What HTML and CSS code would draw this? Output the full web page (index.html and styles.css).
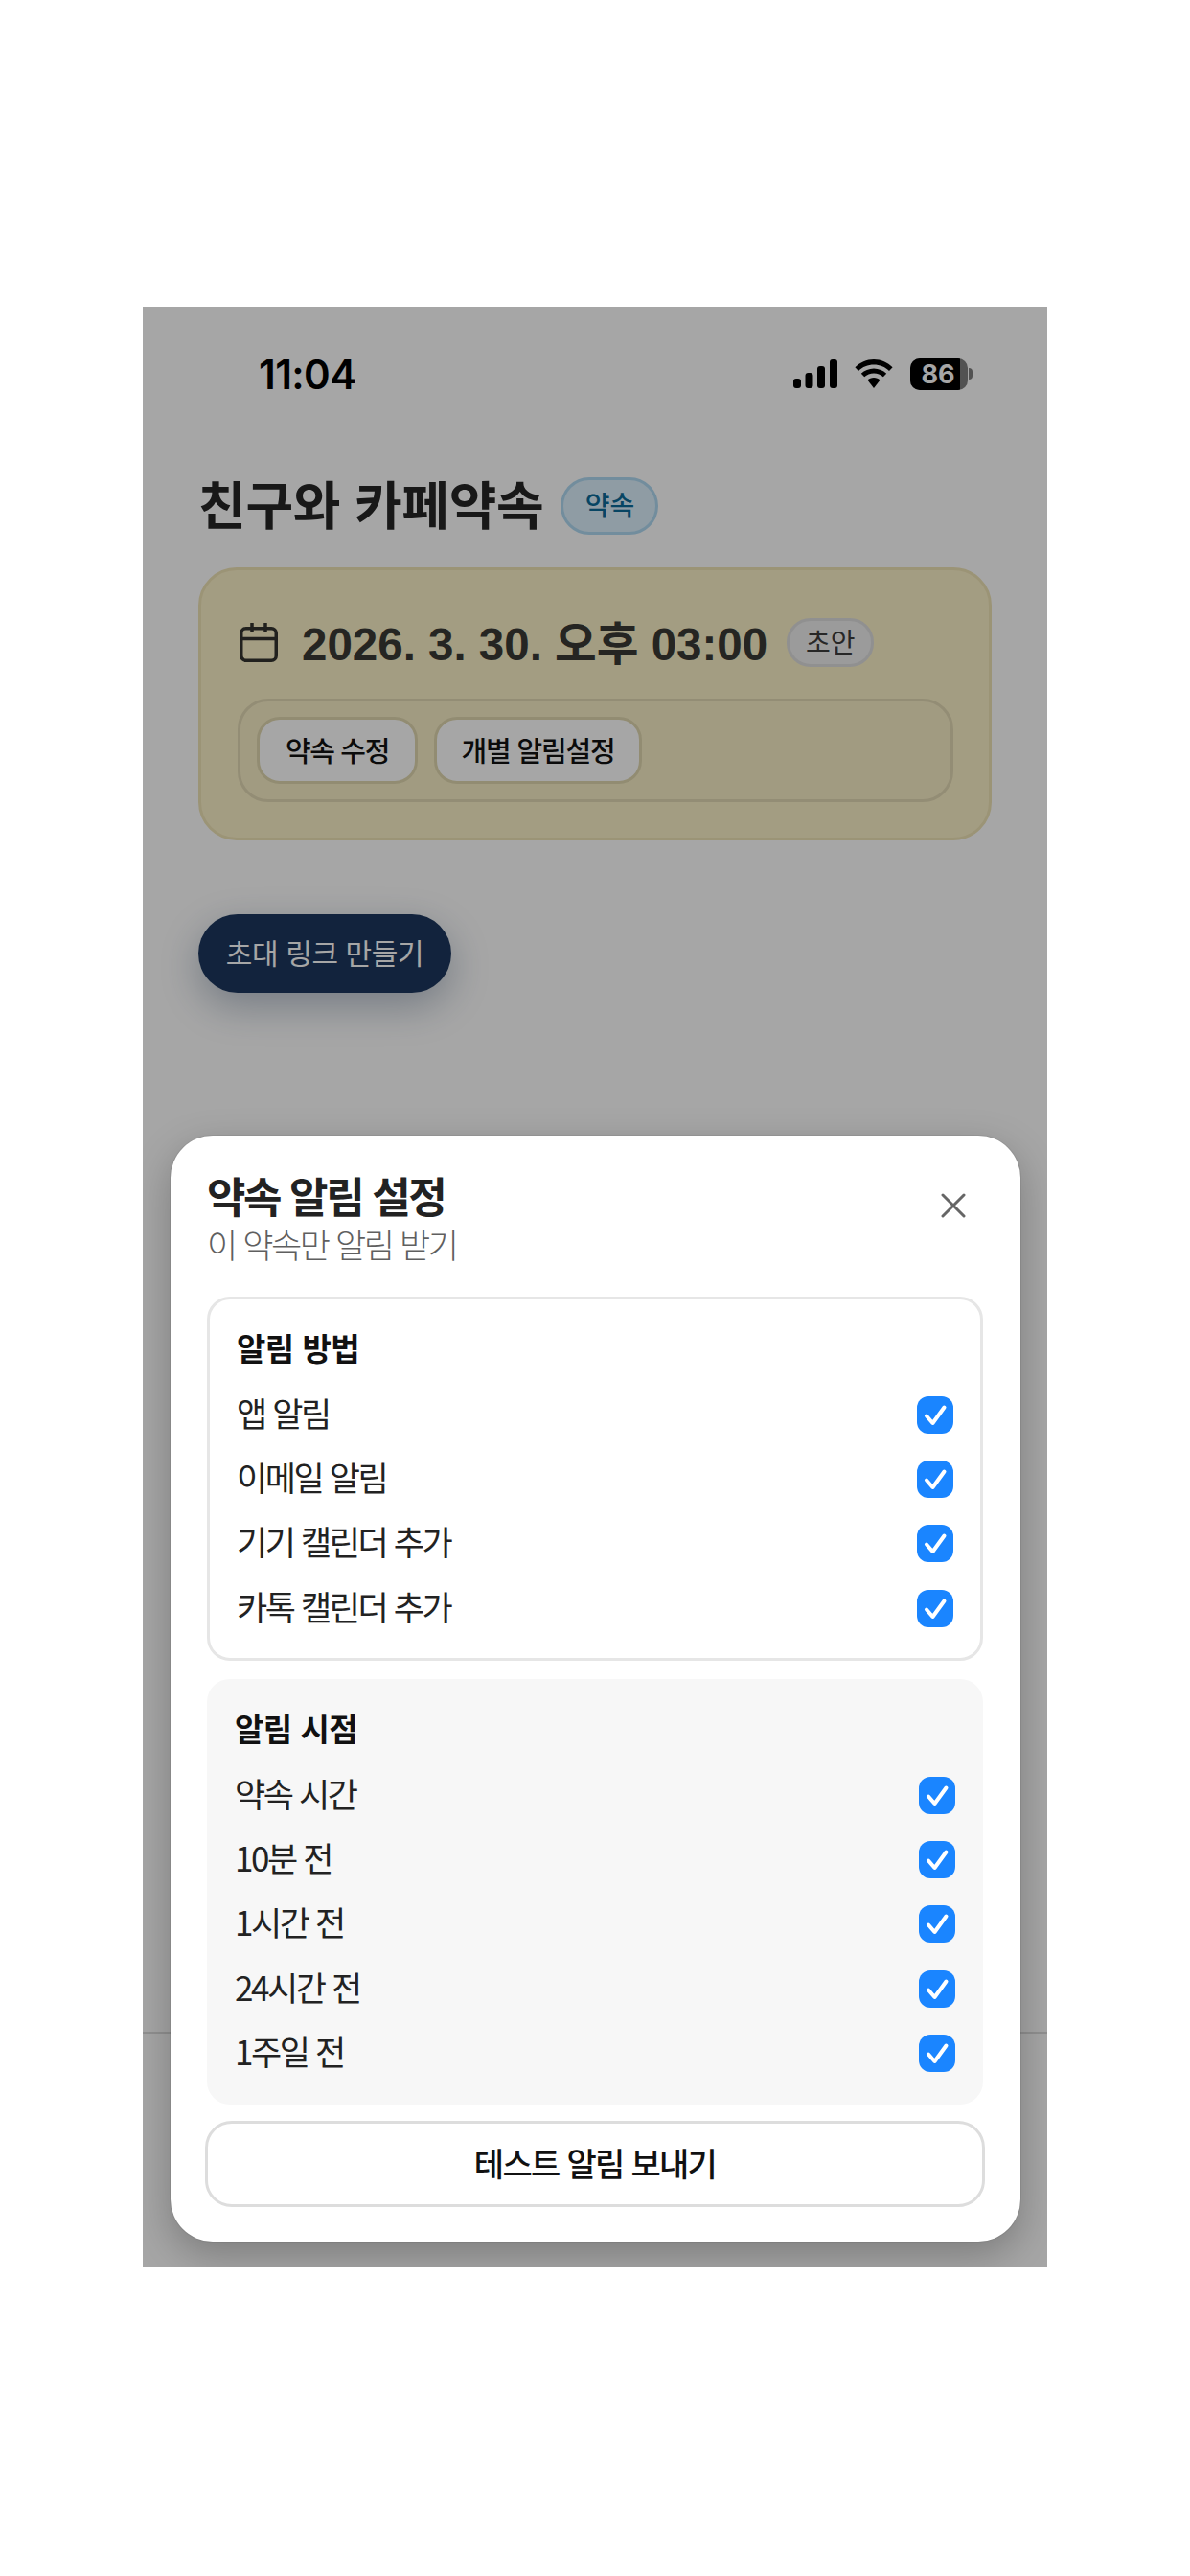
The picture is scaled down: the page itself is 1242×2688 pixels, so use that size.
FILE: index.html
```html
<!DOCTYPE html>
<html lang="ko">
<head>
<meta charset="utf-8">
<title>약속 알림 설정</title>
<link rel="stylesheet" href="styles.css">
</head>
<body>
<div class="phone">
  <div class="screen">
    <div class="status">
      <span class="time">11:04</span>
      <div class="status-icons">
        <svg class="signal" width="46" height="30" viewBox="0 0 46 30"><rect x="0" y="20" width="8" height="10" rx="3"/><rect x="12.500" y="14" width="8" height="16" rx="3"/><rect x="25" y="7" width="8" height="23" rx="3"/><rect x="38" y="0" width="8" height="30" rx="3"/></svg>
        <svg class="wifi" width="40" height="30" viewBox="0 0 40 30"><path d="M20 5.500c6.200 0 11.800 2.400 16 6.400l3.600-3.700C34.400 3.200 27.600 0 20 0S5.600 3.200.4 8.200L4 11.900C8.200 7.900 13.800 5.500 20 5.500z"/><path d="M20 14.500c3.800 0 7.200 1.500 9.800 3.800l3.400-3.600C29.700 11.500 25.100 9.400 20 9.400s-9.700 2.100-13.200 5.300l3.400 3.600c2.600-2.300 6-3.800 9.800-3.800z"/><path d="M20 19c-2.600 0-4.900 1-6.600 2.600L20 30l6.600-8.400C24.900 20 22.600 19 20 19z"/></svg>
        <div class="battery"><div class="batt-body"><span class="batt-fill">86</span></div><span class="batt-cap"></span></div>
      </div>
    </div>
    <div class="title-row">
      <h1 class="title">친구와 카페약속</h1>
      <span class="type-pill">약속</span>
    </div>
    <div class="card">
      <div class="date-row">
        <svg class="cal" width="40" height="41" viewBox="0 0 40 41" fill="none" stroke="#33332e" stroke-width="3.500"><rect x="1.750" y="5.750" width="36.500" height="33.500" rx="5"/><path d="M1.750 16.500h36.500M13 0v10M27 0v10"/></svg>
        <span class="date">2026. 3. 30. 오후 03:00</span>
        <span class="draft">초안</span>
      </div>
      <div class="actions">
        <button class="act act-a">약속 수정</button>
        <button class="act act-b">개별 알림설정</button>
      </div>
    </div>
    <button class="invite">초대 링크 만들기</button>
    <div class="tabline"></div>
  </div>
  <div class="overlay"></div>
  <div class="modal">
    <div class="modal-head">
      <div>
        <div class="modal-title">약속 알림 설정</div>
        <div class="modal-sub">이 약속만 알림 받기</div>
      </div>
      <svg class="close" width="26" height="26" viewBox="0 0 26 26" fill="none" stroke="#666" stroke-width="3" stroke-linecap="round"><path d="M2 2l22 22M24 2L2 24"/></svg>
    </div>
    <section class="box box-a">
      <h2 class="box-title">알림 방법</h2>
      <div class="row"><span>앱 알림</span><svg class="chk" viewBox="0 0 38 39"><rect width="38" height="39" rx="12"/><path d="M10 20.500l6.500 7.500 12-16.500"/></svg></div>
      <div class="row"><span>이메일 알림</span><svg class="chk" viewBox="0 0 38 39"><rect width="38" height="39" rx="12"/><path d="M10 20.500l6.500 7.500 12-16.500"/></svg></div>
      <div class="row"><span>기기 캘린더 추가</span><svg class="chk" viewBox="0 0 38 39"><rect width="38" height="39" rx="12"/><path d="M10 20.500l6.500 7.500 12-16.500"/></svg></div>
      <div class="row"><span>카톡 캘린더 추가</span><svg class="chk" viewBox="0 0 38 39"><rect width="38" height="39" rx="12"/><path d="M10 20.500l6.500 7.500 12-16.500"/></svg></div>
    </section>
    <section class="box box-b">
      <h2 class="box-title">알림 시점</h2>
      <div class="row"><span>약속 시간</span><svg class="chk" viewBox="0 0 38 39"><rect width="38" height="39" rx="12"/><path d="M10 20.500l6.500 7.500 12-16.500"/></svg></div>
      <div class="row"><span>10분 전</span><svg class="chk" viewBox="0 0 38 39"><rect width="38" height="39" rx="12"/><path d="M10 20.500l6.500 7.500 12-16.500"/></svg></div>
      <div class="row"><span>1시간 전</span><svg class="chk" viewBox="0 0 38 39"><rect width="38" height="39" rx="12"/><path d="M10 20.500l6.500 7.500 12-16.500"/></svg></div>
      <div class="row"><span>24시간 전</span><svg class="chk" viewBox="0 0 38 39"><rect width="38" height="39" rx="12"/><path d="M10 20.500l6.500 7.500 12-16.500"/></svg></div>
      <div class="row"><span>1주일 전</span><svg class="chk" viewBox="0 0 38 39"><rect width="38" height="39" rx="12"/><path d="M10 20.500l6.500 7.500 12-16.500"/></svg></div>
    </section>
    <button class="test">테스트 알림 보내기</button>
  </div>
</div>
</body>
</html>
```
FILE: styles.css
```css
* { box-sizing: border-box; }
html, body { margin: 0; padding: 0; background: #fff; }
body {
  width: 1242px;
  height: 2688px;
  padding: 320px 149px 0;
  font-family: "Liberation Sans", "Noto Sans CJK KR", sans-serif;
  overflow: hidden;
}
.phone {
  position: relative;
  width: 944px;
  height: 2046px;
  overflow: hidden;
  background: #fff;
}
.screen { display: flex; flex-direction: column; height: 100%; padding: 0 58px; color: #222; }
.status { display: flex; justify-content: space-between; align-items: center; height: 140px; padding: 0 0 0 63px; }
.time { font-family: Inter, sans-serif; font-size: 42px; font-weight: 600; color: #000; letter-spacing: -.6px; }
.status-icons { display: flex; align-items: center; gap: 18px; margin-right: 20px; }
.status-icons svg { display: block; fill: #000; }
.battery { display: flex; align-items: center; gap: 1px; }
.batt-body { width: 60px; height: 33px; border-radius: 10px; overflow: hidden; background: #7e7e7e; }
.batt-fill { display: block; width: 52px; height: 33px; background: #000; color: #fff; font-family: Inter, sans-serif; font-weight: 700; font-size: 27px; line-height: 33px; text-align: center; padding-left: 6px; }
.batt-cap { width: 4px; height: 12px; border-radius: 0 4px 4px 0; background: #7e7e7e; }
.title-row { display: flex; align-items: center; gap: 18px; margin-top: 38px; height: 60px; }
.title { margin: 0 0 8px; font-family: "Noto Sans CJK KR", sans-serif; font-size: 54px; font-weight: 700; letter-spacing: -.3px; color: #262626; line-height: 61px; }
.type-pill { display: flex; align-items: center; justify-content: center; width: 102px; height: 60px; padding-bottom: 5px; border-radius: 30px; background: #dcf0fc; border: 3px solid #b0d9f2; color: #0b6a99; font-family: "Noto Sans CJK KR", sans-serif; font-size: 28px; font-weight: 500; }
.card { margin-top: 34px; height: 285px; padding: 49px 40px 0; border-radius: 40px; background: #fbf1c8; border: 3px solid #efe3b6; }
.date-row { display: flex; align-items: center; height: 52px; }
.cal { flex: none; margin-right: 25px; }
.date { font-size: 47.500px; font-weight: 700; color: #3a3a35; white-space: nowrap; margin-bottom: 4px; font-family: "Liberation Sans", "Noto Sans CJK KR", sans-serif; }
.draft { display: flex; align-items: center; justify-content: center; width: 91px; height: 51px; padding-bottom: 3px; margin-left: 20px; border-radius: 25px; background: #eee; border: 3px solid #ddd; font-family: "Noto Sans CJK KR", sans-serif; font-size: 28px; color: #3d3d3d; }
.actions { display: flex; gap: 17px; margin: 33px -3px 0 -2px; height: 108px; padding: 16px 17px; border: 3px solid #e2d9b4; background: #f8eec7; border-radius: 32px; }
.act { height: 70px; padding: 0 0 3px; border-radius: 24px; background: #fff; border: 3px solid #e0d8b0; font-family: "Noto Sans CJK KR", sans-serif; font-size: 29px; font-weight: 500; color: #111; }
.act-a { width: 168px; letter-spacing: -1.400px; }
.act-b { width: 217px; letter-spacing: -1.200px; }
.invite { align-self: flex-start; width: 264px; height: 82px; padding: 0 0 5px; margin-top: 77px; border: 0; border-radius: 41px; background: #1c375e; color: #fff; font-family: "Noto Sans CJK KR", sans-serif; font-size: 30px; letter-spacing: -.4px; box-shadow: 0 14px 40px rgba(28,55,94,.32); }
.tabline { position: absolute; left: 0; right: 0; top: 1800px; height: 2px; background: #ddd; }
.overlay { position: absolute; inset: 0; background: rgba(0,0,0,.35); }
.modal { position: absolute; left: 29px; top: 865px; width: 887px; height: 1154px; padding: 38px 37px 0 38px; border-radius: 44px; background: #fff; box-shadow: 0 0 0 1px rgba(0,0,0,.06), 0 14px 40px rgba(0,0,0,.25); font-family: "Noto Sans CJK KR", sans-serif; }
.modal-head { display: flex; justify-content: space-between; align-items: flex-start; height: 130px; padding-right: 20px; }
.close { margin-top: 22px; }
.modal-title { margin-top: -2px; font-size: 44px; font-weight: 700; color: #222; line-height: 52px; letter-spacing: -2.400px; }
.modal-sub { font-size: 35px; font-weight: 300; color: #5f5f5f; line-height: 50px; letter-spacing: -2.400px; }
.box { width: 810px; border-radius: 24px; }
.box-a { height: 380px; padding: 25px 28px 0 28px; border: 3px solid #e6e6e6; }
.box-b { height: 444px; margin-top: 19px; padding: 26px 29px 0 29px; background: #f7f7f7; }
.box-title { margin: 0; height: 62px; font-size: 33px; font-weight: 700; line-height: 50px; color: #111; letter-spacing: -.5px; }
.row { display: flex; align-items: center; justify-content: space-between; height: 67.200px; font-size: 35px; color: #222; letter-spacing: -2.400px; }
.row span { margin-bottom: 6px; }
.chk { display: block; width: 38px; height: 39px; }
.chk rect { fill: #1a85ff; }
.chk path { fill: none; stroke: #fff; stroke-width: 4; stroke-linecap: round; stroke-linejoin: round; }
.test { display: block; width: 814px; height: 90px; margin: 17px 0 0 -2px; padding: 0 0 4px; border: 3px solid #ddd; border-radius: 28px; background: #fff; font-family: "Noto Sans CJK KR", sans-serif; font-size: 34px; font-weight: 500; color: #111; letter-spacing: -1.700px; }
```
